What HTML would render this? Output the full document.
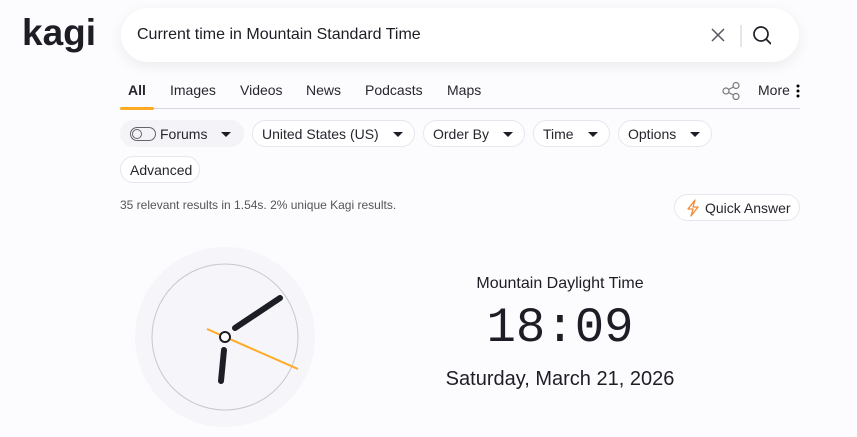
<!DOCTYPE html>
<html><head><style>
*{margin:0;padding:0;box-sizing:border-box}
body{width:857px;height:437px;overflow:hidden;background:#fcfcfe;font-family:"Liberation Sans",sans-serif;color:#1d1d26;position:relative}
.abs{position:absolute}
.logo{left:22px;top:12px;font-size:37px;font-weight:bold;letter-spacing:0px;color:#1d1d26}
.search{left:121px;top:8px;width:678px;height:54px;background:#fff;border-radius:27px;box-shadow:0 4px 14px rgba(0,0,0,0.07)}
.search .q{position:absolute;left:16px;top:18px;font-size:16px;color:#1d1d26}
.tabs span{position:absolute;top:82px;font-size:14px;color:#26262e}
.line{left:120px;top:108px;width:680px;height:1px;background:#d8d8e2}
.ul{left:120px;top:107px;width:34px;height:3px;background:#ffaa22;border-radius:2px}
.pill{position:absolute;height:27px;border:1px solid #e6e6ee;border-radius:14px;background:#fff;font-size:14px;padding:5px 9px;color:#26262e;white-space:nowrap}
.tri{display:inline-block;width:0;height:0;border-left:5px solid transparent;border-right:5px solid transparent;border-top:5px solid #1d1d26;margin-left:14px;vertical-align:2px}
</style></head><body>
<div class="abs logo">kagi</div>
<div class="abs search"><div class="q">Current time in Mountain Standard Time</div>
<svg class="abs" style="left:588px;top:17px" width="62" height="22"><path d="M3 4L15 16M15 4L3 16" stroke="#55555f" stroke-width="1.5"/><line x1="32" y1="0" x2="32" y2="22" stroke="#ccc"/><circle cx="52" cy="9" r="7" fill="none" stroke="#1d1d26" stroke-width="1.7"/><path d="M57 14L62 19" stroke="#1d1d26" stroke-width="1.7"/></svg>
</div>
<div class="tabs"><span style="left:128px;font-weight:bold">All</span><span style="left:170px">Images</span><span style="left:240px">Videos</span><span style="left:306px">News</span><span style="left:365px">Podcasts</span><span style="left:447px">Maps</span><span style="left:758px">More</span></div>
<svg class="abs" style="left:722px;top:82px" width="20" height="18"><circle cx="4" cy="9" r="3" fill="none" stroke="#777" stroke-width="1.2"/><circle cx="14" cy="3.5" r="3" fill="none" stroke="#777" stroke-width="1.2"/><circle cx="14" cy="14.5" r="3" fill="none" stroke="#777" stroke-width="1.2"/><path d="M6.5 7.5L11.5 5M6.5 10.5L11.5 13" stroke="#777" stroke-width="1.2"/></svg>
<svg class="abs" style="left:796px;top:84px" width="4" height="14"><circle cx="2" cy="2" r="1.5"/><circle cx="2" cy="7" r="1.5"/><circle cx="2" cy="12" r="1.5"/></svg>
<div class="abs line"></div><div class="abs ul"></div>
<div class="pill" style="left:120px;top:120px;background:#f3f3f8;border-color:#f3f3f8;width:124px"><span style="display:inline-block;width:26px;height:14px;border:1.3px solid #666;border-radius:7px;vertical-align:-2px;position:relative;margin-right:4px"><span style="position:absolute;left:1px;top:1px;width:10px;height:10px;border:1.2px solid #666;border-radius:50%"></span></span>Forums<span class="tri"></span></div>
<div class="pill" style="left:252px;top:120px;width:163px">United States (US)<span class="tri"></span></div>
<div class="pill" style="left:423px;top:120px;width:102px">Order By<span class="tri"></span></div>
<div class="pill" style="left:533px;top:120px;width:77px">Time<span class="tri"></span></div>
<div class="pill" style="left:618px;top:120px;width:94px">Options<span class="tri"></span></div>
<div class="pill" style="left:120px;top:156px;width:80px">Advanced</div>
<div class="abs" style="left:120px;top:198px;font-size:12px;color:#555">35 relevant results in 1.54s. 2% unique Kagi results.</div>
<div class="pill" style="left:674px;top:194px;width:126px;padding-left:30px">Quick Answer</div>
<svg class="abs" style="left:686px;top:199px" width="14" height="18"><path d="M9 1L2 10H7L5 17L12 8H7Z" fill="none" stroke="#f08a3a" stroke-width="1.3" stroke-linejoin="round"/></svg>
<svg class="abs" style="left:0;top:0" width="857" height="437"><circle cx="225" cy="337" r="90" fill="#f5f5fa"/><circle cx="225" cy="337" r="73" fill="none" stroke="#c8c8cc" stroke-width="1"/>
<line x1="235" y1="328" x2="280" y2="298" stroke="#1d1d26" stroke-width="6" stroke-linecap="round"/>
<line x1="224" y1="350" x2="221" y2="381" stroke="#1d1d26" stroke-width="6" stroke-linecap="round"/>
<line x1="207" y1="329" x2="298" y2="369" stroke="#ffaa22" stroke-width="2"/>
<circle cx="225" cy="337" r="5" fill="#fff" stroke="#1d1d26" stroke-width="2"/></svg>
<div class="abs" style="left:460px;top:275px;width:200px;text-align:center;font-size:16px">Mountain Daylight Time</div>
<div class="abs" style="left:460px;top:300px;width:200px;text-align:center;font-size:49px;font-family:'Liberation Mono',monospace">18:09</div>
<div class="abs" style="left:420px;top:368px;width:280px;text-align:center;font-size:20px">Saturday, March 21, 2026</div>
</body></html>
